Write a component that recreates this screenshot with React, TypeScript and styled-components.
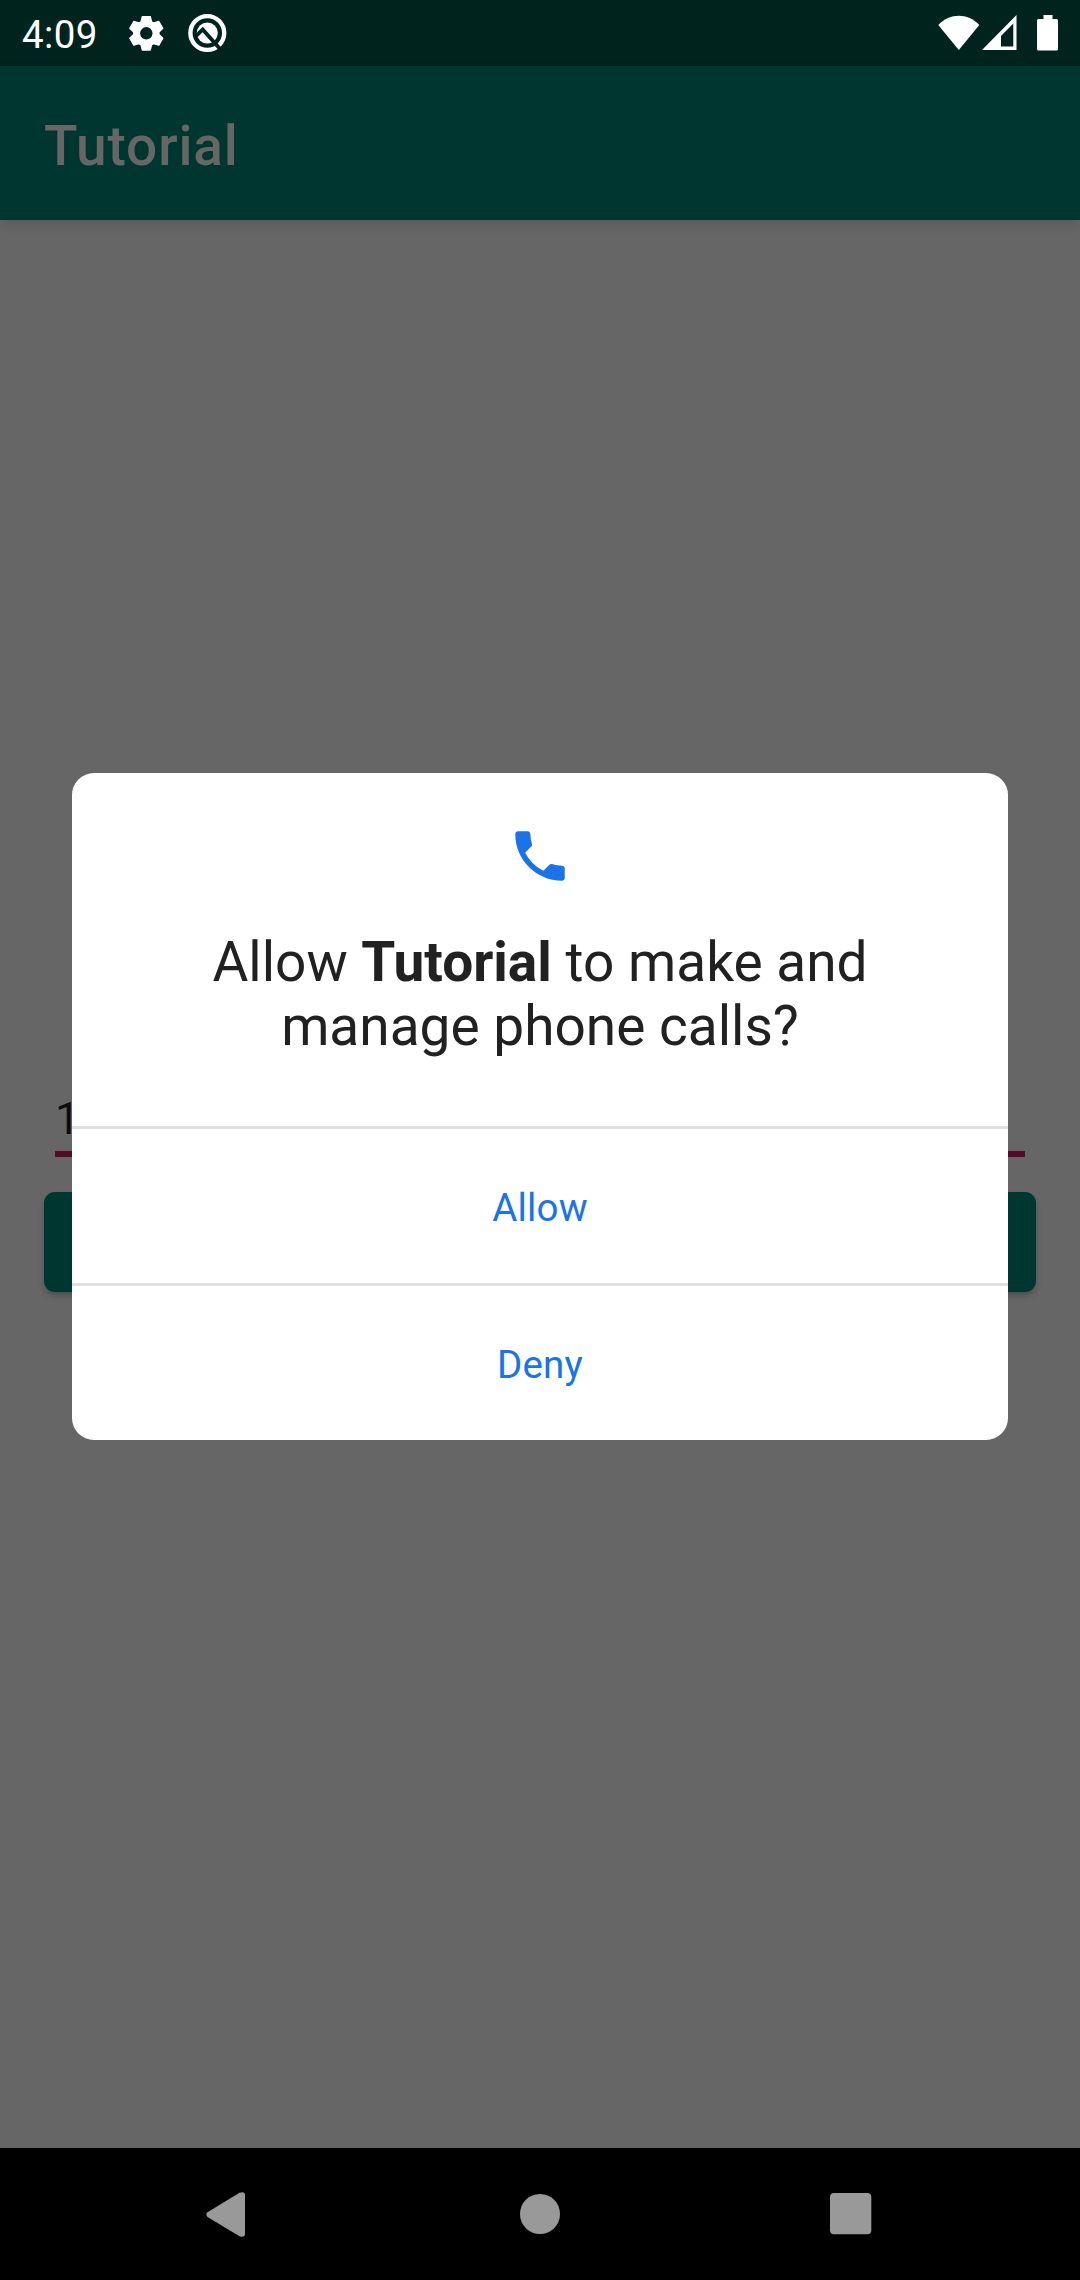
import React from 'react';
import styled, { createGlobalStyle } from 'styled-components';

const GlobalStyle = createGlobalStyle`
  * { box-sizing: border-box; }
  body { margin: 0; background: #666; }
`;

const Screen = styled.div`
  position: relative;
  display: flex;
  flex-direction: column;
  width: 1080px;
  height: 2280px;
  overflow: hidden;
  background: #666;
  font-family: Roboto, sans-serif;
`;

const StatusBar = styled.header`
  display: flex;
  align-items: center;
  justify-content: space-between;
  height: 66px;
  flex: none;
  padding: 0 21px 0 22px;
  background: #00231e;
  color: #fff;
`;

const StatusGroup = styled.div`
  display: flex;
  align-items: center;
`;

const Clock = styled.span`
  width: 103px;
  font-size: 38.5px;
  line-height: 45px;
  padding-top: 2px;
  letter-spacing: 0.4px;
`;

const Glyph = styled.svg<{ $gap?: number }>`
  display: block;
  flex: none;
  margin-left: ${(p) => p.$gap ?? 0}px;
`;

const AppBar = styled.div`
  display: flex;
  align-items: center;
  height: 154px;
  flex: none;
  padding: 0 44px;
  background: #003630;
  box-shadow: 0 4px 10px rgba(0, 0, 0, 0.12);
  z-index: 1;
`;

const Title = styled.h1`
  margin: 0;
  padding-top: 6px;
  color: #666;
  font-size: 55px;
  font-weight: 500;
  line-height: 64px;
  letter-spacing: 0.85px;
`;

const Content = styled.main`
  display: flex;
  flex-direction: column;
  flex: 1;
  padding: 868px 44px 0;
`;

const NumberField = styled.div`
  height: 69px;
  margin: 0 11px;
  padding: 5px 0 0;
  border-bottom: 6px solid #560b29;
  color: #0d0d0d;
  font-size: 44px;
  line-height: 52px;
`;

const CallButton = styled.div`
  height: 100px;
  margin-top: 35px;
  border-radius: 11px;
  background: #003630;
  box-shadow: 0 4px 6px -1px rgba(0, 0, 0, 0.28);
`;

const NavBar = styled.nav`
  display: flex;
  align-items: center;
  justify-content: space-between;
  height: 132px;
  flex: none;
  padding: 0 208px 0 206px;
  background: #000;
`;

const Overlay = styled.div`
  position: absolute;
  inset: 66px 0 132px;
  display: flex;
  align-items: flex-start;
  justify-content: center;
  padding-top: 707px;
  z-index: 2;
`;

const Dialog = styled.section`
  display: flex;
  flex-direction: column;
  width: 936px;
  height: 667px;
  border-radius: 22px;
  background: #fff;
  overflow: hidden;
`;

const DialogBody = styled.div`
  display: flex;
  flex-direction: column;
  align-items: center;
  height: 353px;
  padding-top: 50px;
`;

const Message = styled.p`
  margin: 41px 0 0;
  width: 760px;
  color: #212121;
  font-size: 55px;
  line-height: 64px;
  text-align: center;
`;

const Action = styled.button`
  height: 157px;
  flex: none;
  padding: 3px 0 0;
  border: 0;
  border-top: 3px solid #e0e0e0;
  background: none;
  color: #1a73e8;
  font-family: inherit;
  font-size: 38.5px;
  line-height: 45px;
  letter-spacing: 0.2px;
`;

const gearTeeth = [0, 60, 120, 180, 240, 300];

const gearOutline = gearTeeth
  .flatMap((deg) => {
    const a = (deg * Math.PI) / 180;
    return [
      [-5.3, -11.6],
      [-4, -16.8],
      [4, -16.8],
      [5.3, -11.6],
    ].map(([x, y]) => {
      const px = 21.3 + x * Math.cos(a) - y * Math.sin(a);
      const py = 21.3 + x * Math.sin(a) + y * Math.cos(a);
      return `${px.toFixed(2)} ${py.toFixed(2)}`;
    });
  })
  .join('L');

export default function App() {
  return (
    <>
      <GlobalStyle />
      <Screen>
        <StatusBar>
          <StatusGroup>
            <Clock>4:09</Clock>
            <Glyph width="42" height="42" viewBox="0 0 42 42">
              <path d={`M${gearOutline}Z`} fill="#fff" stroke="#fff" strokeWidth="1.2" strokeLinejoin="round" />
              <circle cx="21.300" cy="21.300" r="6.200" fill="#00231e" />
            </Glyph>
            <Glyph $gap={19} width="42" height="42" viewBox="0 0 42 42">
              <circle cx="21.300" cy="21" r="16.900" fill="none" stroke="#fff" strokeWidth="4.400" />
              <circle cx="21.300" cy="21" r="10.500" fill="#fff" />
              <path d="M9.700 24.300L16.700 17.500L35.500 38.500" fill="none" stroke="#00231e" strokeWidth="3.800" />
            </Glyph>
          </StatusGroup>
          <StatusGroup>
            <Glyph width="42" height="36" viewBox="0 0 42 36">
              <path fill="#fff" d="M.3 10C12-2.300 29.700-2.300 41.300 10L20.800 35z" />
            </Glyph>
            <Glyph $gap={2} width="35" height="36" viewBox="0 0 35 36">
              <path fill="#fff" fillRule="evenodd" d="M34.500 0V35H0zM31.300 8.500L19 21V31.500H31.300z" />
            </Glyph>
            <Glyph $gap={20} width="22" height="36" viewBox="0 0 22 36">
              <path
                fill="#fff"
                d="M6.500 0h9v4H19.500q1.500 0 1.500 1.500V34q0 1.500-1.500 1.500H1.500Q0 35.500 0 34V5.500Q0 4 1.500 4h5z"
              />
            </Glyph>
          </StatusGroup>
        </StatusBar>
        <AppBar>
          <Title>Tutorial</Title>
        </AppBar>
        <Content>
          <NumberField>1</NumberField>
          <CallButton />
        </Content>
        <NavBar>
          <Glyph width="39" height="45" viewBox="0 0 39 45">
            <path
              fill="#999"
              d="M1.500 20.200L33.500.8Q38.900-1 39 3V42Q38.900 46 33.500 44.200L1.500 25Q-.8 22.600 1.500 20.200z"
            />
          </Glyph>
          <Glyph $gap={5} width="40" height="40" viewBox="0 0 40 40">
            <circle cx="20" cy="20" r="20" fill="#999" />
          </Glyph>
          <Glyph width="42" height="42" viewBox="0 0 42 42">
            <rect width="41.300" height="41.300" rx="4" fill="#999" />
          </Glyph>
        </NavBar>
        <Overlay>
          <Dialog>
            <DialogBody>
              <Glyph width="66" height="66" viewBox="0 0 24 24">
                <path
                  fill="#1a73e8"
                  d="M20 15.500c-1.250 0-2.450-.2-3.570-.57a1.020 1.020 0 0 0-1.020.24l-2.200 2.200a15.045 15.045 0 0 1-6.590-6.590l2.200-2.210c.28-.26.36-.65.250-1A11.360 11.360 0 0 1 8.500 4c0-.55-.45-1-1-1H4c-.55 0-1 .45-1 1 0 9.390 7.610 17 17 17 .55 0 1-.45 1-1v-3.500c0-.55-.45-1-1-1z"
                />
              </Glyph>
              <Message>
                Allow <b>Tutorial</b> to make and
                <br />
                manage phone calls?
              </Message>
            </DialogBody>
            <Action>Allow</Action>
            <Action>Deny</Action>
          </Dialog>
        </Overlay>
      </Screen>
    </>
  );
}
